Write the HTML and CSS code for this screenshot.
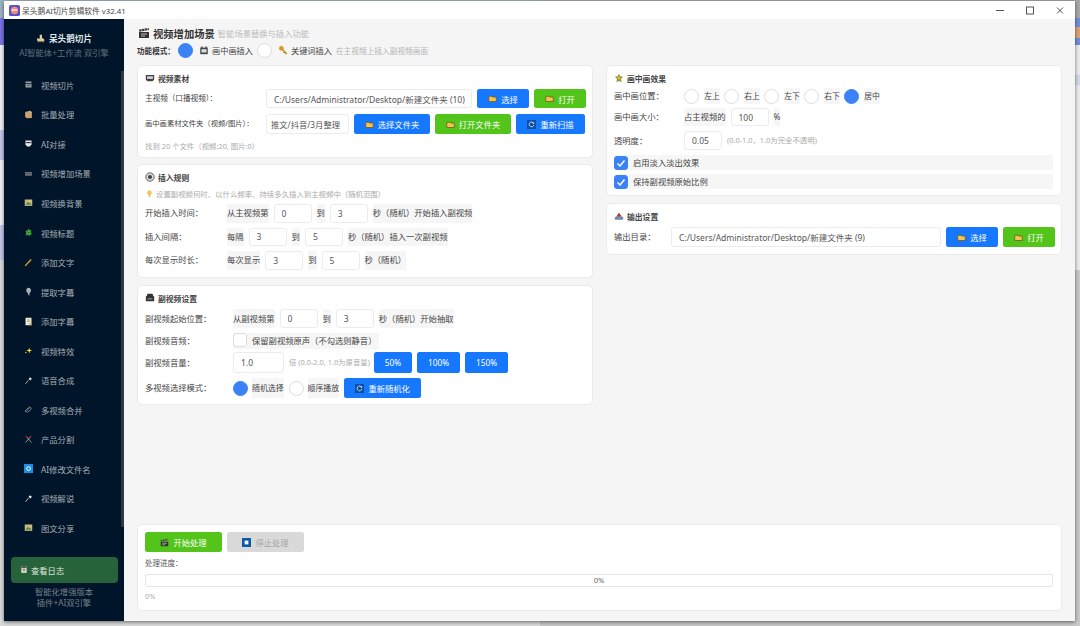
FILE: index.html
```html
<!DOCTYPE html>
<html lang="zh-CN">
<head>
    <meta charset="UTF-8">
    <title>呆头鹅AI切片剪辑软件 v32.41</title>
    <link rel="stylesheet" href="styles.css">
</head>
<body>

    <svg class="icon-defs" width="0" height="0">
        <symbol id="i-folder" viewBox="0 0 12 12">
            <path d="M1 3h4l1 1h5v6H1z" fill="#f2c450" stroke="#6b5520" stroke-width="1"/>
        </symbol>
        <symbol id="i-refresh" viewBox="0 0 12 12">
            <rect width="12" height="12" fill="#0b4f9e"/>
            <path d="M8.8 4.2A3.2 3.2 0 1 0 9.2 6.6" fill="none" stroke="#cfe6ff" stroke-width="1.2"/>
            <path d="M9.6 2.4v2.6H7z" fill="#cfe6ff"/>
        </symbol>
        <symbol id="i-clapper" viewBox="0 0 12 12">
            <path d="M1 5h10v6H1z" fill="#333"/>
            <path d="M1 2.5l9.6-1.6.4 2.2L1.4 4.7z" fill="#333"/>
            <path d="M3 2.2l1 2M6 1.7l1 2M9 1.2l1 2M3 7h6M3 9h4" stroke="#ddd" stroke-width=".8"/>
        </symbol>
    </svg>

    <div class="window">
        <div class="titlebar">
            <svg class="app-logo" viewBox="0 0 12 12">
                <rect width="12" height="12" rx="2" fill="#5a4fd0"/>
                <circle cx="6" cy="6" r="4" fill="#f28a7a"/>
                <rect x="3" y="4.5" width="6" height="2" fill="#f5e0c0"/>
            </svg>
            <span class="app-title">呆头鹅AI切片剪辑软件 v32.41</span>
            <div class="win-controls">
                <svg viewBox="0 0 30 18"><path d="M11 9.5h8" stroke="#555"/></svg>
                <svg viewBox="0 0 30 18"><rect x="11.5" y="6" width="7" height="7" fill="none" stroke="#555"/></svg>
                <svg viewBox="0 0 30 18"><path d="M12 6.500l6 6M18 6.500l-6 6" stroke="#555"/></svg>
            </div>
        </div>

        <div class="app-body">
            <div class="sidebar">
                <div class="brand">
                    <div class="brand-name">
                        <svg class="nav-icon-sm" viewBox="0 0 12 12"><path d="M5 1h3v4l3 2v3H2L1 6h4z" fill="#d8c9a0"/><path d="M2 10h9v1H2z" fill="#7a6a3a"/></svg>
                        呆头鹅切片
                    </div>
                    <div class="brand-sub">AI智能体+工作流 双引擎</div>
                </div>
                <ul class="nav-list">
                    <li><svg viewBox="0 0 12 12"><path d="M2 2h8v2H2zM2 5h8v5H2z" fill="#9aa0a6"/><path d="M4 7h4" stroke="#333"/></svg>视频切片</li>
                    <li><svg viewBox="0 0 12 12"><path d="M1.500 2.500L8 1l2.500 2v7.500l-7 .5-2-2z" fill="#c9a070"/><path d="M8 1v3l2.500-1" fill="#e6c79a"/></svg>批量处理</li>
                    <li><svg viewBox="0 0 12 12"><path d="M2 2h8v5l-2 3H4L2 7z" fill="#e6e6e6"/><path d="M3 4h6v1.500H3z" fill="#333"/></svg>AI对接</li>
                    <li><svg viewBox="0 0 12 12"><path d="M1.500 4h9v5h-9z" fill="#6e7378"/><path d="M3 6h6" stroke="#444"/></svg>视频增加场景</li>
                    <li><svg viewBox="0 0 12 12"><rect x="1" y="2" width="10" height="8.500" fill="#c8b888"/><path d="M2 9l3-4 2 2 1-1 2 3z" fill="#4f8a3f"/><circle cx="8" cy="4" r="1" fill="#f0d050"/></svg>视频换背景</li>
                    <li><svg viewBox="0 0 12 12"><path d="M2 4l3-1 1-2 2 2 2 0-1 3 2 2-3 1-1 2-2-2-3 1 1-3z" fill="#3fa535"/><path d="M5 5l2 2" stroke="#0e3a14"/></svg>视频标题</li>
                    <li><svg viewBox="0 0 12 12"><path d="M1.500 10.500L9.500 2" stroke="#e8a92c" stroke-width="1.700"/></svg>添加文字</li>
                    <li><svg viewBox="0 0 12 12"><path d="M6 1a3.500 3.500 0 0 1 3 5c-.5 1.500-1.500 2-2 3l1 2H6L5 8C3.500 7 3 5.500 3 4.500 3 2.500 4.500 1 6 1z" fill="#aab0b5"/></svg>提取字幕</li>
                    <li><svg viewBox="0 0 12 12"><path d="M2 1h8v10H2z" fill="#efe9d8"/><path d="M4 4h4M4 6h4" stroke="#a89868"/><path d="M7 8h3v3H7z" fill="#c8b070"/></svg>添加字幕</li>
                    <li><svg viewBox="0 0 12 12"><path d="M7 2l.9 3.100L11 6l-3.100.9L7 10l-.9-3.100L3 6l3.100-.9z" fill="#f5e028"/><circle cx="2.500" cy="8.500" r="1" fill="#f5c028"/></svg>视频特效</li>
                    <li><svg viewBox="0 0 12 12"><path d="M2 10.500l4-5" stroke="#aaa" stroke-width="1.300"/><path d="M6 4l2-2.500 2.500 2L8.500 6z" fill="#ddd"/></svg>语音合成</li>
                    <li><svg viewBox="0 0 12 12"><path d="M5 8L2.500 9.500 1.500 8 6 3.500 8 2.500l1.500 1.500-.5 2L5 9.500M7 4l-3 3" fill="none" stroke="#aab0b5" stroke-width=".9"/></svg>多视频合并</li>
                    <li><svg viewBox="0 0 12 12"><path d="M2 10L9 2M10 10L3 2" stroke="#b8c0c8" stroke-width="1"/><path d="M1 1.500h4L3.500 4zM7 1.500h4L8.500 4z" fill="#8a2020"/></svg>产品分割</li>
                    <li><svg viewBox="0 0 12 12"><rect width="12" height="12" fill="#1a8fe8"/><circle cx="6" cy="6" r="2.500" fill="none" stroke="#fff" stroke-width="1.300"/></svg>AI修改文件名</li>
                    <li><svg viewBox="0 0 12 12"><path d="M2 10.500l4-5" stroke="#bbb" stroke-width="1.300"/><path d="M6 4l2-2.500 2.500 2L8.500 6z" fill="#eee"/></svg>视频解说</li>
                    <li><svg viewBox="0 0 12 12"><rect x="1" y="2" width="10" height="8.500" fill="#c8b888"/><path d="M2 9l3-4 2 2 1-1 2 3z" fill="#4f8a3f"/><circle cx="8" cy="4" r="1" fill="#f0d050"/></svg>图文分享</li>
                </ul>
                <div class="log-button">
                    <svg viewBox="0 0 12 12"><path d="M2 1h8v10H2z" fill="#e8e4d4"/><path d="M2 1h8v3H2z" fill="#555"/><path d="M4 6h4M4 8h4" stroke="#555"/></svg>
                    查看日志
                </div>
                <div class="sidebar-footer">智能化增强版本<br>插件+AI双引擎</div>
            </div>

            <div class="main-content">
                <div class="page-header">
                    <svg class="page-icon"><use href="#i-clapper"/></svg>
                    <h2 class="page-title">视频增加场景</h2>
                    <span class="page-sub">智能场景替换与插入功能</span>
                </div>
                <div class="mode-row">
                    <b class="mode-label">功能模式：</b>
                    <span class="radio on"></span>
                    <svg class="mode-icon" viewBox="0 0 12 12"><path d="M1.500 3h9v8h-9z" fill="#444"/><path d="M3 5h6v4H3z" fill="#ddd"/><path d="M3.500 1.500v2M8.500 1.500v2" stroke="#444" stroke-width="1.200"/></svg>
                    <span class="mode-text">画中画插入</span>
                    <span class="radio"></span>
                    <svg class="mode-icon key" viewBox="0 0 12 12"><circle cx="4" cy="4" r="2.800" fill="#d99a1c"/><path d="M5.500 5.500l5 5M8 8l-1.500 1.500M10 10l-1 1" stroke="#b57c10" stroke-width="1.500"/></svg>
                    <span class="mode-text">关键词插入</span>
                    <span class="mode-hint">在主视频上插入副视频画面</span>
                </div>

                <div class="columns">
                    <div class="column">
                        <div class="card card-source">
                            <div class="card-title">
                                <svg viewBox="0 0 12 12"><path d="M1 2.500h10v5.500L9 10H3L1 8z" fill="#444"/><path d="M2.500 4h7v3h-7z" fill="#ddd"/></svg>
                                视频素材
                            </div>
                            <div class="row row-a">
                                <span class="label label-source main-video">主视频（口播视频）：</span>
                                <input class="text-input path-main" type="text" value="C:/Users/Administrator/Desktop/新建文件夹 (10)">
                                <button class="btn btn-blue btn-52"><svg><use href="#i-folder"/></svg>选择</button>
                                <button class="btn btn-green btn-52"><svg><use href="#i-folder"/></svg>打开</button>
                            </div>
                            <div class="row row-b">
                                <span class="label label-source small">画中画素材文件夹（视频/图片）：</span>
                                <input class="text-input path-short" type="text" value="推文/抖音/3月整理">
                                <button class="btn btn-blue btn-76"><svg><use href="#i-folder"/></svg>选择文件夹</button>
                                <button class="btn btn-green btn-76"><svg><use href="#i-folder"/></svg>打开文件夹</button>
                                <button class="btn btn-blue btn-69"><svg><use href="#i-refresh"/></svg>重新扫描</button>
                            </div>
                            <div class="hint found">找到 20 个文件（视频:20, 图片:0）</div>
                        </div>

                        <div class="card card-rules">
                            <div class="card-title">
                                <svg viewBox="0 0 12 12"><circle cx="6" cy="6" r="5" fill="#ddd" stroke="#444"/><circle cx="6" cy="6" r="2.500" fill="#444"/></svg>
                                插入规则
                            </div>
                            <div class="hint rules-hint">
                                <svg viewBox="0 0 12 12"><path d="M6 .5a4 4 0 0 1 2.500 7L8 9H4l-.5-1.500A4 4 0 0 1 6 .5z" fill="#f2c14e"/><path d="M4.500 10.500h3" stroke="#8a7a50" stroke-width="1.400"/></svg>
                                设置副视频何时、以什么频率、持续多久插入到主视频中（随机范围）
                            </div>
                            <div class="row row-rule">
                                <span class="label label-rule">开始插入时间：</span>
                                <span class="chip">从主视频第</span>
                                <input class="text-input num" type="text" value="0">
                                <span class="chip">到</span>
                                <input class="text-input num" type="text" value="3">
                                <span class="chip">秒（随机）开始插入副视频</span>
                            </div>
                            <div class="row row-rule">
                                <span class="label label-rule">插入间隔：</span>
                                <span class="chip">每隔</span>
                                <input class="text-input num" type="text" value="3">
                                <span class="chip">到</span>
                                <input class="text-input num" type="text" value="5">
                                <span class="chip">秒（随机）插入一次副视频</span>
                            </div>
                            <div class="row row-rule">
                                <span class="label label-rule">每次显示时长：</span>
                                <span class="chip">每次显示</span>
                                <input class="text-input num" type="text" value="3">
                                <span class="chip">到</span>
                                <input class="text-input num" type="text" value="5">
                                <span class="chip">秒（随机）</span>
                            </div>
                        </div>

                        <div class="card card-sub">
                            <div class="card-title">
                                <svg viewBox="0 0 12 12"><path d="M3 1h6l1 3h1v6H1V4h1z" fill="#333"/><path d="M3 7h6" stroke="#bbb"/></svg>
                                副视频设置
                            </div>
                            <div class="row row-sub1">
                                <span class="label label-sub">副视频起始位置：</span>
                                <span class="chip">从副视频第</span>
                                <input class="text-input num" type="text" value="0">
                                <span class="chip">到</span>
                                <input class="text-input num" type="text" value="3">
                                <span class="chip">秒（随机）开始抽取</span>
                            </div>
                            <div class="row row-sub2">
                                <span class="label label-sub">副视频音频：</span>
                                <span class="chip chip-check"><span class="checkbox"></span>保留副视频原声（不勾选则静音）</span>
                            </div>
                            <div class="row row-sub3">
                                <span class="label label-sub">副视频音量：</span>
                                <input class="text-input vol" type="text" value="1.0">
                                <span class="hint vol-hint">倍 (0.0-2.0, 1.0为原音量)</span>
                                <button class="btn btn-blue btn-38">50%</button>
                                <button class="btn btn-blue btn-43">100%</button>
                                <button class="btn btn-blue btn-43">150%</button>
                            </div>
                            <div class="row row-sub4">
                                <span class="label label-sub">多视频选择模式：</span>
                                <span class="radio on"></span>
                                <span class="chip tight">随机选择</span>
                                <span class="radio"></span>
                                <span class="chip tight">顺序播放</span>
                                <button class="btn btn-blue btn-77"><svg><use href="#i-refresh"/></svg>重新随机化</button>
                            </div>
                        </div>
                    </div>

                    <div class="column">
                        <div class="card card-pip">
                            <div class="card-title">
                                <svg viewBox="0 0 12 12"><path d="M6 1l1.500 3 3.500.5L8.500 7 9 11 6 9.500 3 11l.5-4L1 4.500 4.500 4z" fill="#8f9a3a"/><circle cx="6" cy="6" r="1.800" fill="#e2b93b"/></svg>
                                画中画效果
                            </div>
                            <div class="row row-pos">
                                <span class="label label-pip">画中画位置：</span>
                                <span class="radio"></span><span class="chip pos">左上</span>
                                <span class="radio"></span><span class="chip pos">右上</span>
                                <span class="radio"></span><span class="chip pos">左下</span>
                                <span class="radio"></span><span class="chip pos">右下</span>
                                <span class="radio on"></span><span class="chip pos">居中</span>
                            </div>
                            <div class="row row-size">
                                <span class="label label-pip">画中画大小：</span>
                                <span class="chip">占主视频的</span>
                                <input class="text-input num" type="text" value="100">
                                <span class="chip">%</span>
                            </div>
                            <div class="row row-alpha">
                                <span class="label label-pip">透明度：</span>
                                <input class="text-input num" type="text" value="0.05">
                                <span class="hint">(0.0-1.0，1.0为完全不透明)</span>
                            </div>
                            <div class="check-row first">
                                <span class="checkbox on"><svg viewBox="0 0 12 12"><path d="M2.500 6.500l2.500 2.500 4.500-5.500" fill="none" stroke="#fff" stroke-width="1.500"/></svg></span>
                                <span class="check-text">启用淡入淡出效果</span>
                            </div>
                            <div class="check-row">
                                <span class="checkbox on"><svg viewBox="0 0 12 12"><path d="M2.500 6.500l2.500 2.500 4.500-5.500" fill="none" stroke="#fff" stroke-width="1.500"/></svg></span>
                                <span class="check-text">保持副视频原始比例</span>
                            </div>
                        </div>

                        <div class="card card-output">
                            <div class="card-title">
                                <svg viewBox="0 0 12 12"><path d="M1 7h10v3.500H1z" fill="#6a8fb0"/><path d="M6 2l3.500 5h-7z" fill="#a04030"/></svg>
                                输出设置
                            </div>
                            <div class="row row-output">
                                <span class="label label-output">输出目录：</span>
                                <input class="text-input path-output" type="text" value="C:/Users/Administrator/Desktop/新建文件夹 (9)">
                                <button class="btn btn-blue btn-52"><svg><use href="#i-folder"/></svg>选择</button>
                                <button class="btn btn-green btn-52"><svg><use href="#i-folder"/></svg>打开</button>
                            </div>
                        </div>
                    </div>
                </div>

                <div class="card card-run">
                    <div class="row row-run">
                        <button class="btn btn-green btn-77"><svg><use href="#i-clapper"/></svg>开始处理</button>
                        <button class="btn btn-off btn-77"><svg viewBox="0 0 12 12"><rect width="12" height="12" fill="#0b5aa8"/><rect x="3.500" y="3.500" width="5" height="5" fill="#fff"/></svg>停止处理</button>
                    </div>
                    <div class="progress-label">处理进度：</div>
                    <div class="progress-bar">0%</div>
                    <div class="hint progress-note">0%</div>
                </div>
            </div>
        </div>
    </div>

</body>
</html>
```

FILE: styles.css
```css
* {
    box-sizing: border-box;
}

html, body {
    height: 100%;
}

body {
    margin: 0;
    padding: 1px 5px 5px 4px;
    overflow: hidden;
    font-family: "Noto Sans", "Noto Sans CJK SC", sans-serif;
    font-size: 8.3px;
    color: #444;
    background-color: #c9c9c9;
    background-image:
        linear-gradient(#9db4c4 0 18px, #7b73e8 18px 45px, #f2f2f6 45px 130px, #c4c8ea 130px 160px, #f2f2f6 160px 225px, #c4c8ea 225px 260px, #dcdcdc 260px),
        linear-gradient(#a8a8a8 0 18px, #6f8fe0 18px 27px, #e0a070 27px 38px, #6f8fe0 38px 45px, #ececec 45px 75px, #d4d8ec 75px 85px, #ececec 85px 270px, #c9c9c9 270px);
    background-size: 50% 100%, 50% 100%;
    background-position: left top, right top;
    background-repeat: no-repeat;
}

.icon-defs {
    position: absolute;
}

.window {
    display: flex;
    flex-direction: column;
    height: 100%;
    background-color: #f5f5f5;
    box-shadow: 0 1px 4px rgba(0, 0, 0, 0.55);
}

/* Title bar */
.titlebar {
    display: flex;
    align-items: center;
    flex: 0 0 18px;
    padding-left: 5px;
    background-color: #fff;
}

.app-logo {
    width: 11px;
    height: 11px;
    margin-right: 2px;
}

.app-title {
    font-size: 7.8px;
    color: #444;
}

.win-controls {
    display: flex;
    margin-left: auto;
    margin-right: 0;
}

.win-controls svg {
    width: 30px;
    height: 18px;
}

.app-body {
    display: flex;
    flex: 1;
    min-height: 0;
}

/* Sidebar */
.sidebar {
    position: relative;
    display: flex;
    flex-direction: column;
    flex: 0 0 120px;
    background-color: #001529;
    color: #a6adb4;
}

.sidebar::after {
    content: "";
    position: absolute;
    top: 52px;
    right: 0;
    width: 3px;
    height: 456px;
    background-color: #2c3a47;
}

.brand {
    height: 52px;
    padding-top: 13px;
    text-align: center;
}

.brand-name {
    display: flex;
    justify-content: center;
    align-items: center;
    gap: 4px;
    height: 12px;
    font-size: 8.6px;
    font-weight: 700;
    color: #dfe3e6;
}

.nav-icon-sm {
    width: 9px;
    height: 9px;
}

.brand-sub {
    margin-top: 2px;
    font-size: 8.3px;
    color: #5f6f7e;
}

.nav-list {
    list-style: none;
    margin: 0;
    padding: 0;
}

.nav-list li {
    display: flex;
    align-items: center;
    height: 29.55px;
    padding-left: 20px;
    padding-bottom: 2px;
    white-space: nowrap;
}

.nav-list svg {
    width: 9px;
    height: 9px;
    margin-right: 8px;
}

.log-button {
    display: flex;
    align-items: center;
    gap: 3px;
    height: 26px;
    margin: auto 6px 0 7px;
    padding-left: 9px;
    padding-bottom: 1px;
    border-radius: 4px;
    background-color: #27633a;
    color: #dfe8df;
    font-size: 8.3px;
}

.log-button svg {
    width: 8px;
    height: 9px;
}

.sidebar-footer {
    height: 38px;
    padding-top: 3px;
    text-align: center;
    line-height: 11px;
    color: #76808a;
}

/* Main */
.main-content {
    display: flex;
    flex-direction: column;
    flex: 1;
    min-width: 0;
    padding: 7px 13px 10px 13px;
}

.page-header {
    display: flex;
    align-items: center;
    height: 14px;
    padding-left: 1px;
}

.page-icon {
    width: 12px;
    height: 12px;
    margin-right: 3px;
}

.page-title {
    margin: 0 3px 0 0;
    font-size: 10.3px;
    font-weight: 700;
    color: #333;
}

.page-sub {
    font-size: 8.3px;
    color: #bbb;
}

.mode-row {
    display: flex;
    align-items: center;
    height: 16px;
    margin-top: 2px;
}

.mode-label {
    width: 41px;
    font-size: 7.6px;
    color: #333;
}

.mode-icon {
    width: 10px;
    height: 10px;
    margin: 0 3px 0 6px;
}

.mode-text {
    margin-right: 4px;
    font-size: 8.2px;
    white-space: nowrap;
}

.mode-hint {
    font-size: 7.7px;
    color: #b5b5b5;
}

.columns {
    display: grid;
    grid-template-columns: 456px 456px;
    gap: 13px;
    margin-top: 7px;
}

.column {
    display: flex;
    flex-direction: column;
    gap: 7px;
}

/* Cards */
.card {
    padding: 7px 8px 7px 7px;
    border: 1px solid #ebebeb;
    border-radius: 5px;
    background-color: #fff;
}

.card-source { height: 93px; }
.card-rules { height: 114px; margin-top: -1px; }
.card-sub { height: 120px; }
.card-pip { height: 131px; }
.card-output { height: 52px; }

.card-title {
    display: flex;
    align-items: center;
    gap: 3px;
    height: 10px;
    font-size: 7.8px;
    font-weight: 700;
    color: #444;
}

.card-title svg {
    width: 10px;
    height: 10px;
}

.row {
    display: flex;
    align-items: center;
    gap: 5px;
    white-space: nowrap;
}

.label {
    flex: none;
    margin-right: -5px;
}

.label,
.chip,
.check-text,
.hint {
    padding-bottom: 2px;
}

.label-source { width: 121px; }
.label-rule { width: 82px; }
.label-sub { width: 88px; }
.label-pip { width: 70px; }
.label-output { width: 57px; }
.label.main-video { font-size: 7.6px; }
.label.small { font-size: 7.3px; }

.row-a { height: 19px; margin-top: 6px; }
.row-b { height: 20px; margin-top: 6px; }
.row-rule { height: 18.500px; margin-top: 5px; }
.row-sub1 { height: 19px; margin-top: 6px; }
.row-sub2 { height: 16px; margin-top: 5px; }
.row-sub3 { height: 21px; margin-top: 3px; }
.row-sub4 { height: 20px; margin-top: 5px; }
.row-pos { height: 16px; margin-top: 5px; }
.row-size { height: 18px; margin-top: 4px; }
.row-alpha { height: 19px; margin-top: 5px; }
.row-output { height: 20px; margin-top: 6px; }
.row-run { height: 20px; }

.found { margin-top: 6px; }

.rules-hint {
    display: flex;
    align-items: center;
    gap: 3px;
    height: 10px;
    margin-top: 6px;
    margin-bottom: 6px;
    padding-bottom: 0;
}

.rules-hint svg {
    width: 7px;
    height: 9px;
    margin-left: 1px;
}

.hint {
    font-size: 7.4px;
    color: #aaa;
}

.vol-hint {
    width: 80px;
}

.chip {
    display: flex;
    align-items: center;
    align-self: stretch;
    background-color: #f6f6f6;
}

.chip.tight {
    margin-left: -1px;
    font-size: 7.9px;
}

.chip.pos {
    width: 16px;
    justify-content: center;
    margin-right: -1px;
    font-size: 7.8px;
}

.chip-check {
    gap: 5px;
    padding-right: 3px;
}

.text-input {
    flex: none;
    height: 100%;
    padding: 0 7px;
    border: 1px solid #ececec;
    border-radius: 3px;
    outline: none;
    background-color: #fff;
    font-family: inherit;
    font-size: 8.5px;
    color: #555;
}

.num { width: 38px; }
.vol { width: 51px; }
.path-main { width: 206px; padding-right: 2px; }
.path-short { width: 83px; padding: 0 0 0 4px; font-size: 8.3px; }
.path-output { width: 270px; }

.radio {
    flex: none;
    width: 15px;
    height: 15px;
    border: 1px solid #ddd;
    border-radius: 50%;
    background-color: #fff;
}

.radio.on {
    border-color: #3b82f6;
    background-color: #3b82f6;
}

.checkbox {
    flex: none;
    width: 14px;
    height: 14px;
    border: 1px solid #ddd;
    border-radius: 3px;
    background-color: #fff;
}

.checkbox.on {
    border-color: #3b82f6;
    background-color: #3b82f6;
}

.checkbox svg {
    display: block;
    width: 12px;
    height: 12px;
}

.check-row {
    display: flex;
    align-items: center;
    height: 15px;
    margin-top: 4px;
    background-color: #f6f6f6;
}

.check-row.first {
    margin-top: 5px;
}

.check-text {
    margin-left: 5px;
}

/* Buttons */
.btn {
    display: flex;
    flex: none;
    justify-content: center;
    align-items: center;
    gap: 4px;
    height: 100%;
    padding: 0;
    border: none;
    border-radius: 2.500px;
    font-family: inherit;
    font-size: 8.3px;
    color: #fff;
}

.btn svg {
    width: 9px;
    height: 9px;
}

.btn-blue { background-color: #1677ff; }
.btn-green { background-color: #52c41a; }
.btn-off { background-color: #d9d9d9; color: #a5a5a5; }

.btn-38 { width: 38px; }
.btn-43 { width: 43px; }
.btn-52 { width: 52px; }
.btn-69 { width: 69px; }
.btn-76 { width: 76px; }
.btn-77 { width: 77px; }

/* Bottom card */
.card-run {
    height: 87px;
    margin-top: auto;
}

.progress-label {
    margin-top: 6px;
    height: 10px;
    line-height: 10px;
    font-size: 7.5px;
    color: #555;
}

.progress-bar {
    height: 13px;
    margin-top: 6px;
    border: 1px solid #e6e6e6;
    border-radius: 2px;
    text-align: center;
    line-height: 11px;
    font-size: 7.6px;
    color: #666;
}

.progress-note {
    margin-top: 4px;
    line-height: 11px;
}
```
